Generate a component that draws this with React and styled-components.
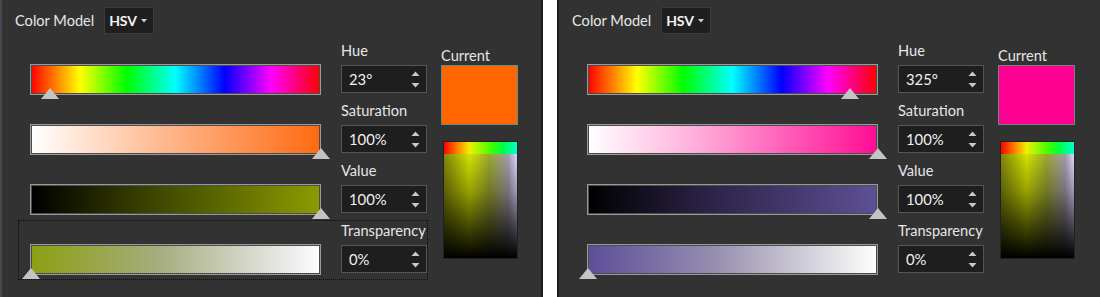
import React from "react";
import styled, { createGlobalStyle } from "styled-components";

const GlobalStyle = createGlobalStyle`
  html, body {
    margin: 0;
    padding: 0;
    background: #ffffff;
  }
  body {
    font-family: Lato, "Open Sans", sans-serif;
  }
`;

const HUE_GRADIENT =
  "linear-gradient(to right, #ff0000 0%, #ffff00 17%, #00ff00 33%, #00ffff 50%, #0000ff 67%, #ff00ff 83%, #ff0000 100%)";

const Screen = styled.div`
  display: flex;
  gap: 14px;
  width: 1100px;
  height: 297px;
  overflow: hidden;
`;

const Panel = styled.div`
  width: 543px;
  height: 297px;
  box-sizing: border-box;
  background: #323232;
  border-left: 2px solid ${(props) => props.edge};
  border-right: ${(props) => (props.last ? "none" : "2px solid #1c1c1c")};
  color: #e4e4e4;
  display: flex;
  flex-direction: column;
`;

const Header = styled.div`
  display: flex;
  align-items: center;
  gap: 10px;
  padding: 7px 0 0 13px;
  height: 27px;
  margin-bottom: 6px;
`;

const Label = styled.span`
  font-size: 14.6px;
  line-height: 18px;
  color: #e6e6e6;
  white-space: nowrap;
`;

const Dropdown = styled.div`
  display: flex;
  align-items: center;
  justify-content: space-between;
  box-sizing: border-box;
  width: 50px;
  height: 27px;
  padding: 0 6px 0 4px;
  background: #1f1f1f;
  border: 1px solid #3b3b3b;
  font-size: 14px;
  font-weight: 700;
  letter-spacing: -0.2px;
  color: #f2f2f2;
  svg {
    display: block;
  }
`;

const Body = styled.div`
  display: flex;
  padding-left: 16px;
`;

const Rows = styled.div`
  display: flex;
  flex-direction: column;
`;

const Row = styled.div`
  display: grid;
  grid-template-columns: 291px 86px;
  column-gap: 20px;
  box-sizing: border-box;
  width: 410px;
  height: 60px;
  padding-left: 12px;
  outline: ${(props) => (props.focused ? "1px dotted #0c0c0c" : "none")};
  outline-offset: -1px;
`;

const SliderCell = styled.div`
  position: relative;
  padding-top: 24px;
`;

const Bar = styled.div`
  box-sizing: border-box;
  height: 31px;
  border: 1px solid #9a9a9a;
  box-shadow: inset 0 0 0 1px #4c4c4c;
  background: ${(props) => props.fill};
`;

const Marker = styled.div`
  position: absolute;
  top: 48px;
  width: 0;
  height: 0;
  margin-left: -9px;
  border-left: 9px solid transparent;
  border-right: 9px solid transparent;
  border-bottom: 11px solid #c4c4c4;
`;

const FieldCell = styled.div`
  display: flex;
  flex-direction: column;
  padding-top: 2px;
`;

const SpinBox = styled.div`
  display: flex;
  align-items: center;
  justify-content: space-between;
  box-sizing: border-box;
  height: 28px;
  margin-top: 5px;
  padding: 0 6px 0 7px;
  background: #1e1e1e;
  border: 1px solid #555555;
  font-size: 14.8px;
  color: #f0f0f0;
`;

const Arrows = styled.div`
  display: flex;
  flex-direction: column;
  gap: 7px;
  svg {
    display: block;
  }
`;

const Preview = styled.div`
  display: flex;
  flex-direction: column;
  margin-left: 13px;
  padding-top: 7px;
`;

const Swatch = styled.div`
  box-sizing: border-box;
  width: 77px;
  height: 60px;
  background: ${(props) => props.color};
  border: 1px solid #6c8a80;
`;

const Field = styled.div`
  box-sizing: border-box;
  width: 75px;
  height: 118px;
  margin: 16px 0 0 2px;
  border: 1px solid #222222;
  display: flex;
  flex-direction: column;
`;

const FieldStrip = styled.div`
  height: 12px;
  background: linear-gradient(to right, #ff0000 0%, #ff8a00 20%, #f0f000 35%, #40ff00 65%, #00ff40 80%, #00ffd0 100%);
`;

const FieldArea = styled.div`
  flex: 1;
  background: linear-gradient(to bottom, rgba(0, 0, 0, 0) 0%, rgba(0, 0, 0, 0.28) 35%, rgba(0, 0, 0, 0.68) 70%, #000000 100%),
    linear-gradient(to right, #80860a 0%, #d4e400 35%, #9ca830 62%, #a49cac 88%, #e0d8ff 100%);
`;

const Caret = () => (
  <svg width="6" height="4" viewBox="0 0 6 4">
    <path d="M0 0 L6 0 L3 3.5 Z" fill="#cfcfcf" />
  </svg>
);

const SpinArrows = () => (
  <Arrows>
    <svg width="9" height="5" viewBox="0 0 9 5">
      <path d="M0.5 5 L8.5 5 L4.5 0.5 Z" fill="#c8c8c8" />
    </svg>
    <svg width="9" height="5" viewBox="0 0 9 5">
      <path d="M0.5 0 L8.5 0 L4.5 4.5 Z" fill="#c8c8c8" />
    </svg>
  </Arrows>
);

const panels = [
  {
    edge: "#474750",
    current: "#ff6600",
    rows: [
      { label: "Hue", value: "23°", fill: HUE_GRADIENT, pos: 23 / 360 },
      {
        label: "Saturation",
        value: "100%",
        fill: "linear-gradient(to right, #ffffff 0%, #ffb990 45%, #ff6a12 100%)",
        pos: 1,
      },
      {
        label: "Value",
        value: "100%",
        fill: "linear-gradient(to right, #000000 0%, #333a00 35%, #8a9c00 100%)",
        pos: 1,
      },
      {
        label: "Transparency",
        value: "0%",
        fill: "linear-gradient(to right, #8ca012 0%, #a6ad80 45%, #ececec 90%, #ffffff 100%)",
        pos: 0,
        focused: true,
      },
    ],
  },
  {
    edge: "#1c1c1c",
    current: "#ff0090",
    last: true,
    rows: [
      { label: "Hue", value: "325°", fill: HUE_GRADIENT, pos: 325 / 360 },
      {
        label: "Saturation",
        value: "100%",
        fill: "linear-gradient(to right, #ffffff 0%, #ffa8d8 40%, #ff0c94 100%)",
        pos: 1,
      },
      {
        label: "Value",
        value: "100%",
        fill: "linear-gradient(to right, #000000 0%, #2a2244 40%, #5e5096 100%)",
        pos: 1,
      },
      {
        label: "Transparency",
        value: "0%",
        fill: "linear-gradient(to right, #5c4e98 0%, #9890b0 45%, #e8e8ea 88%, #ffffff 100%)",
        pos: 0,
      },
    ],
  },
];

const ColorPanel = ({ data }) => (
  <Panel edge={data.edge} last={data.last}>
    <Header>
      <Label>Color Model</Label>
      <Dropdown>
        HSV
        <Caret />
      </Dropdown>
    </Header>
    <Body>
      <Rows>
        {data.rows.map((row) => (
          <Row key={row.label} focused={row.focused}>
            <SliderCell>
              <Bar fill={row.fill} />
              <Marker style={{ left: `${1 + row.pos * 290}px` }} />
            </SliderCell>
            <FieldCell>
              <Label>{row.label}</Label>
              <SpinBox>
                {row.value}
                <SpinArrows />
              </SpinBox>
            </FieldCell>
          </Row>
        ))}
      </Rows>
      <Preview>
        <Label>Current</Label>
        <Swatch color={data.current} />
        <Field>
          <FieldStrip />
          <FieldArea />
        </Field>
      </Preview>
    </Body>
  </Panel>
);

const App = () => (
  <>
    <GlobalStyle />
    <Screen>
      {panels.map((p, i) => (
        <ColorPanel key={i} data={p} />
      ))}
    </Screen>
  </>
);

export default App;
